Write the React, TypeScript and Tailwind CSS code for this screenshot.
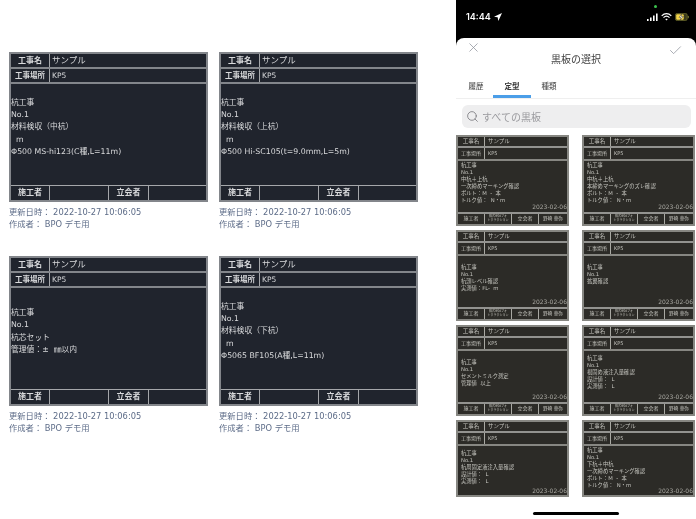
import { Check, Search, X } from 'lucide-react'

const cjk = "font-['DejaVu_Sans','Noto_Sans_CJK_JP',sans-serif]"

const siteBoards: string[][] = [
  ['杭工事', 'No.1', '材料検収（中杭）', '\u00a0\u00a0m', 'Φ500 MS-hi123(C種,L=11m)'],
  ['杭工事', 'No.1', '材料検収（上杭）', '\u00a0\u00a0m', 'Φ500 Hi-SC105(t=9.0mm,L=5m)'],
  ['杭工事', 'No.1', '杭芯セット', '管理値：±\u00a0\u00a0㎜以内'],
  ['杭工事', 'No.1', '材料検収（下杭）', '\u00a0\u00a0m', 'Φ5065 BF105(A種,L=11m)'],
]

const phoneBoards: string[][] = [
  ['杭工事', 'No.1', '中杭＋上杭', '一次締めマーキング確認', 'ボルト：M\u00a0\u00a0-\u00a0\u00a0本', 'トルク値：\u00a0\u00a0N・m'],
  ['杭工事', 'No.1', '中杭＋上杭', '本締めマーキングのズレ確認', 'ボルト：M\u00a0\u00a0-\u00a0\u00a0本', 'トルク値：\u00a0\u00a0N・m'],
  ['杭工事', 'No.1', '杭頭レベル確認', '実測値：FL-\u00a0\u00a0m'],
  ['杭工事', 'No.1', '拡翼確認', '\u00a0'],
  ['杭工事', 'No.1', 'セメントミルク測定', '管理値\u00a0\u00a0以上'],
  ['杭工事', 'No.1', '根固め液注入量確認', '設計値：\u00a0\u00a0L', '実測値：\u00a0\u00a0L'],
  ['杭工事', 'No.1', '杭周固定液注入量確認', '設計値：\u00a0\u00a0L', '実測値：\u00a0\u00a0L'],
  ['杭工事', 'No.1', '下杭＋中杭', '一次締めマーキング確認', 'ボルト：M\u00a0\u00a0-\u00a0\u00a0本', 'トルク値：\u00a0\u00a0N・m'],
]

function SiteCard({ lines }: { lines: string[] }) {
  return (
    <div>
      <div className="flex h-[150px] flex-col border-2 border-[#83868b] bg-[#20242d] text-[#d9dadc]">
        <div className="flex h-[15px] border-b-2 border-[#83868b]">
          <div className="flex w-[39px] items-center justify-center border-r border-[#a5a7aa] text-[8px] font-bold">工事名</div>
          <div className="flex items-center pl-[2px] text-[8.5px]">サンプル</div>
        </div>
        <div className="flex h-[15px] border-b-2 border-[#83868b]">
          <div className="flex w-[39px] items-center justify-center border-r border-[#a5a7aa] text-[7.5px] font-bold">工事場所</div>
          <div className="flex items-center pl-[2px] text-[7.5px]">KP5</div>
        </div>
        <div className="flex flex-1 flex-col justify-center pb-[14px] text-[7.8px] leading-[12.3px]">
          {lines.map((line, i) => (
            <div key={i}>{line}</div>
          ))}
        </div>
        <div className="flex h-[15px] border-t border-[#a5a7aa] text-[8px] font-bold">
          <div className="flex w-[39px] items-center justify-center border-r border-[#a5a7aa]">施工者</div>
          <div className="w-[59px] border-r border-[#a5a7aa]" />
          <div className="flex w-[40px] items-center justify-center border-r border-[#a5a7aa]">立会者</div>
        </div>
      </div>
      <div className="mt-[4px] text-[8.3px] leading-[12px] text-[#5d6c88]">
        <div>更新日時： 2022-10-27 10:06:05</div>
        <div>作成者： BPO デモ用</div>
      </div>
    </div>
  )
}

function PhoneBoard({ lines, short }: { lines: string[]; short: boolean }) {
  return (
    <div className={`relative flex shrink-0 flex-col border-2 border-[#878782] bg-[#2c2b27] text-[#c4c4be] ${short ? 'h-[77px]' : 'h-[91px]'}`}>
      <div className="flex h-[11px] shrink-0 border-b-2 border-[#939390] text-[5.5px]">
        <div className="flex w-[27px] items-center justify-center border-r border-[#a9a9a3]">工事名</div>
        <div className="flex items-center pl-[3px]">サンプル</div>
      </div>
      <div className="flex h-[13px] shrink-0 border-b-2 border-[#878782] text-[5px]">
        <div className="flex w-[27px] items-center justify-center border-r border-[#a9a9a3]">工事場所</div>
        <div className="flex items-center pl-[3px]">KP5</div>
      </div>
      <div className={`flex flex-1 flex-col justify-center pl-[3px] text-[5.3px] leading-[7px] ${short ? 'pb-[6px]' : 'pb-[8px]'}`}>
        {lines.map((line, i) => (
          <div key={i}>{line}</div>
        ))}
      </div>
      <div className={`absolute right-0 text-[6px] leading-[7px] text-[#a8a7a1] ${short ? 'bottom-[1px]' : 'bottom-[14px]'}`}>2023-02-06</div>
      {!short && (
        <div className="flex h-[12px] shrink-0 border-t-2 border-[#939390] text-[5px]">
          <div className="flex w-[27px] items-center justify-center border-r border-[#a9a9a3]">施工者</div>
          <div className="flex w-[27px] items-center justify-center border-r border-[#a9a9a3] text-center text-[3px] leading-[3.6px]">
            株式会社フォ
            <br />
            トクラクション
          </div>
          <div className="flex w-[27px] items-center justify-center border-r border-[#a9a9a3]">立会者</div>
          <div className="flex flex-1 items-center justify-center whitespace-nowrap text-[4.6px]">野崎 華弥</div>
        </div>
      )}
    </div>
  )
}

function StatusIcons() {
  return (
    <div className="flex items-center gap-[3px]">
      <svg width="11" height="8" viewBox="0 0 11 8" fill="#fff">
        <rect x="0" y="6" width="1.6" height="2" />
        <rect x="3" y="4.5" width="1.6" height="3.5" />
        <rect x="6" y="2.5" width="1.6" height="5.5" />
        <rect x="9" y="0.5" width="1.6" height="7.5" />
      </svg>
      <svg width="11" height="8" viewBox="0 0 11 8" fill="none" stroke="#fff" strokeWidth="1.2">
        <path d="M0.7 2.8C3.5 0 7.5 0 10.3 2.8" />
        <path d="M2.5 4.6C4.2 3 6.8 3 8.5 4.6" />
        <path d="M4.3 6.3C5 5.7 6 5.7 6.7 6.3L5.5 7.6Z" fill="#fff" stroke="none" />
      </svg>
      <svg width="14" height="8" viewBox="0 0 14 8">
        <rect x="0.4" y="0.4" width="11.8" height="7.2" rx="1.8" fill="#3a3a1c" stroke="#77762e" strokeWidth="0.7" />
        <rect x="1.2" y="1.2" width="7.5" height="5.6" rx="1" fill="#f4d54a" />
        <path d="M6.8 0.8L4 4.4H6L5.2 7.2L8.2 3.4H6.2Z" fill="#fff" stroke="#111" strokeWidth="0.4" />
        <rect x="12.8" y="2.7" width="1" height="2.6" rx="0.5" fill="#77762e" />
      </svg>
    </div>
  )
}

function PhonePanel() {
  return (
    <div className="flex h-[519px] w-[240px] flex-col bg-black">
      <div className="relative flex h-[38px] shrink-0 items-start justify-between pl-[10px] pr-[7px] pt-[11px] text-white">
        <div className="flex items-center gap-[3px] font-['Inter',sans-serif] text-[9px] font-semibold leading-[12px]">
          14:44
          <svg width="8" height="8" viewBox="0 0 7 7" fill="#fff">
            <path d="M7 0L0 3.2L3.2 3.8L3.8 7Z" />
          </svg>
        </div>
        <div className="pt-[2px]">
          <StatusIcons />
        </div>
        <div className="absolute right-[39px] top-[5px] h-[3px] w-[3px] rounded-full bg-[#3bc24e]" />
      </div>
      <div className="flex min-h-0 flex-1 flex-col rounded-t-lg bg-white">
        <div className="relative h-[38px] shrink-0">
          <X className="absolute left-[10px] top-[2px] h-[15px] w-[15px] text-[#8e929b]" strokeWidth={1.2} />
          <Check className="absolute right-[13px] top-[5px] h-[15px] w-[15px] text-[#8e929b]" strokeWidth={1.2} />
          <div className="pt-[15px] text-center text-[10px] leading-[14px] text-[#3d3d3d]">黒板の選択</div>
        </div>
        <div className="flex h-[23px] shrink-0 border-b border-[#efefef] pl-[3px] text-[7.5px] font-medium text-[#555]">
          <div className="flex w-[34px] items-center justify-center">履歴</div>
          <div className="flex w-[38px] items-center justify-center border-b-[3px] border-[#4b9ee8] pt-[3px] font-bold text-[#333]">定型</div>
          <div className="flex w-[36px] items-center justify-center">種類</div>
        </div>
        <div className="shrink-0 px-[6px] pb-[7px] pt-[6px] pr-[5px]">
          <div className="flex h-[23px] items-center gap-[3px] rounded-md bg-[#eeeeef] pl-[4px] text-[10px] text-[#9a9a9e]">
            <Search className="h-[13px] w-[13px] text-[#77787c]" strokeWidth={1.5} />
            <span className="pt-[1px]">すべての黒板</span>
          </div>
        </div>
        <div className="grid shrink-0 grid-cols-[113px_113px] content-start gap-x-[13px] gap-y-[4px]">
          {phoneBoards.map((lines, i) => (
            <PhoneBoard key={i} lines={lines} short={i >= 6} />
          ))}
        </div>
        <div className="flex flex-1 justify-center pt-[15px]">
          <div className="h-[3px] w-[86px] rounded-full bg-black" />
        </div>
      </div>
    </div>
  )
}

export default function App() {
  return (
    <div className={`flex h-[519px] w-[696px] justify-between overflow-hidden bg-white blur-[0.45px] ${cjk}`}>
      <div className="grid grid-cols-[199px_199px] content-start gap-x-[11px] gap-y-[26px] pl-[9px] pt-[52px]">
        {siteBoards.map((lines, i) => (
          <SiteCard key={i} lines={lines} />
        ))}
      </div>
      <PhonePanel />
    </div>
  )
}
